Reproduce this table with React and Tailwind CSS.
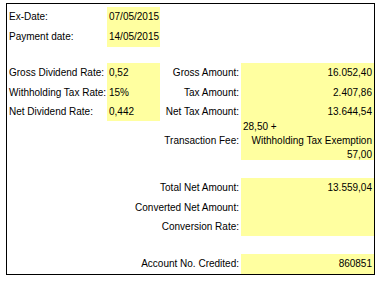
const Cell = ({ children, yellow = false, align = "left", className = "" }) => (
  <div
    className={`flex items-center whitespace-nowrap px-[2px] ${yellow ? "bg-[#ffffa0]" : ""} ${
      align === "right" ? "justify-end" : "justify-start"
    } ${className}`}
  >
    {children}
  </div>
);

const Blank = () => <div className="col-span-4" />;

const App = () => {
  return (
    <div className="w-[384px] h-[284px] bg-white pt-[3px] pl-[6px] text-black text-[10px] leading-none font-['Liberation_Sans',Arial,sans-serif]">
      <div className="w-[369px] h-[272px] border border-black pt-[3px]">
        <div className="grid grid-cols-[100px_53px_81px_133px] grid-rows-[20px_20px_16px_20px_19px_19px_39px_18px_20px_19px_19px_18px_20px]">
          <Cell>Ex-Date:</Cell>
          <Cell yellow>07/05/2015</Cell>
          <div className="col-span-2" />

          <Cell>Payment date:</Cell>
          <Cell yellow>14/05/2015</Cell>
          <div className="col-span-2" />

          <Blank />

          <Cell>Gross Dividend Rate:</Cell>
          <Cell yellow>0,52</Cell>
          <Cell align="right">Gross Amount:</Cell>
          <Cell yellow align="right">16.052,40</Cell>

          <Cell>Withholding Tax Rate:</Cell>
          <Cell yellow>15%</Cell>
          <Cell align="right">Tax Amount:</Cell>
          <Cell yellow align="right">2.407,86</Cell>

          <Cell>Net Dividend Rate:</Cell>
          <Cell yellow>0,442</Cell>
          <Cell align="right">Net Tax Amount:</Cell>
          <Cell yellow align="right">13.644,54</Cell>

          <div className="col-span-2" />
          <Cell align="right">Transaction Fee:</Cell>
          <div className="bg-[#ffffa0] px-[2px] flex flex-col justify-center leading-[14px] whitespace-nowrap">
            <div className="text-left">28,50 +</div>
            <div className="text-right">Withholding Tax Exemption</div>
            <div className="text-right">57,00</div>
          </div>

          <Blank />

          <div className="col-span-2" />
          <Cell align="right">Total Net Amount:</Cell>
          <Cell yellow align="right">13.559,04</Cell>

          <div className="col-span-2" />
          <Cell align="right">Converted Net Amount:</Cell>
          <Cell yellow />

          <div className="col-span-2" />
          <Cell align="right">Conversion Rate:</Cell>
          <Cell yellow />

          <Blank />

          <div className="col-span-2" />
          <Cell align="right">Account No. Credited:</Cell>
          <Cell yellow align="right">860851</Cell>
        </div>
      </div>
    </div>
  );
};

export default App;
